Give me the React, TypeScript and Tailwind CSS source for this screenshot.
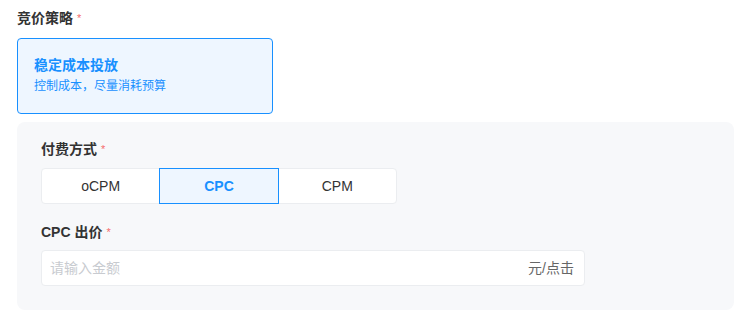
import { useState } from 'react';

const FONT = '[font-family:"Liberation_Sans","Noto_Sans_CJK_SC",sans-serif]';

const Label = ({ text }: { text: string }) => (
    <div className="flex items-center h-[20px] text-[14px] leading-[20px] font-bold text-[#333]">
        <span>{text}</span>
        <span className="ml-[4px] text-[11px] text-[#f56c6c] font-normal">*</span>
    </div>
);

export default function App() {
    const [mode, setMode] = useState('CPC');
    const modes = ['oCPM', 'CPC', 'CPM'];

    return (
        <div className={`w-[746px] h-[319px] bg-white pl-[17px] pt-[8px] ${FONT}`}>
            {/* 竞价策略 */}
            <Label text="竞价策略" />

            <div className="mt-[10px] w-[256px] h-[76px] rounded-[4px] border border-[#1890ff] bg-[#eef6ff] pl-[16px] pt-[16px]">
                <div className="text-[14px] leading-[20px] font-bold text-[#1890ff]">稳定成本投放</div>
                <div className="mt-[2px] text-[12px] leading-[18px] text-[#1890ff]">控制成本，尽量消耗预算</div>
            </div>

            {/* Sub panel */}
            <div className="mt-[8px] w-[717px] rounded-[8px] bg-[#f7f8fa] px-[24px] pt-[17px] pb-[24px]">
                <Label text="付费方式" />

                <div className="mt-[9px] flex w-[356px] h-[36px] rounded-[4px] bg-white border border-[#ebedf0]">
                    {modes.map((m) => {
                        const active = m === mode;
                        return (
                            <button
                                key={m}
                                onClick={() => setMode(m)}
                                className={
                                    active
                                        ? 'flex-1 -my-px flex items-center justify-center border border-[#1890ff] bg-[#eef6ff] text-[14px] font-bold text-[#1890ff]'
                                        : 'flex-1 flex items-center justify-center text-[14px] text-[#333]'
                                }
                            >
                                {m}
                            </button>
                        );
                    })}
                </div>

                <div className="mt-[18px]">
                    <Label text="CPC 出价" />
                </div>

                <div className="mt-[8px] flex items-center w-[544px] h-[36px] rounded-[4px] bg-white border border-[#ebedf0] pl-[8px] pr-[10px]">
                    <input
                        className="flex-1 bg-transparent outline-none text-[14px] text-[#333] placeholder:text-[#c8cbd0]"
                        placeholder="请输入金额"
                    />
                    <span className="text-[14px] text-[#666]">元/点击</span>
                </div>
            </div>
        </div>
    );
}
